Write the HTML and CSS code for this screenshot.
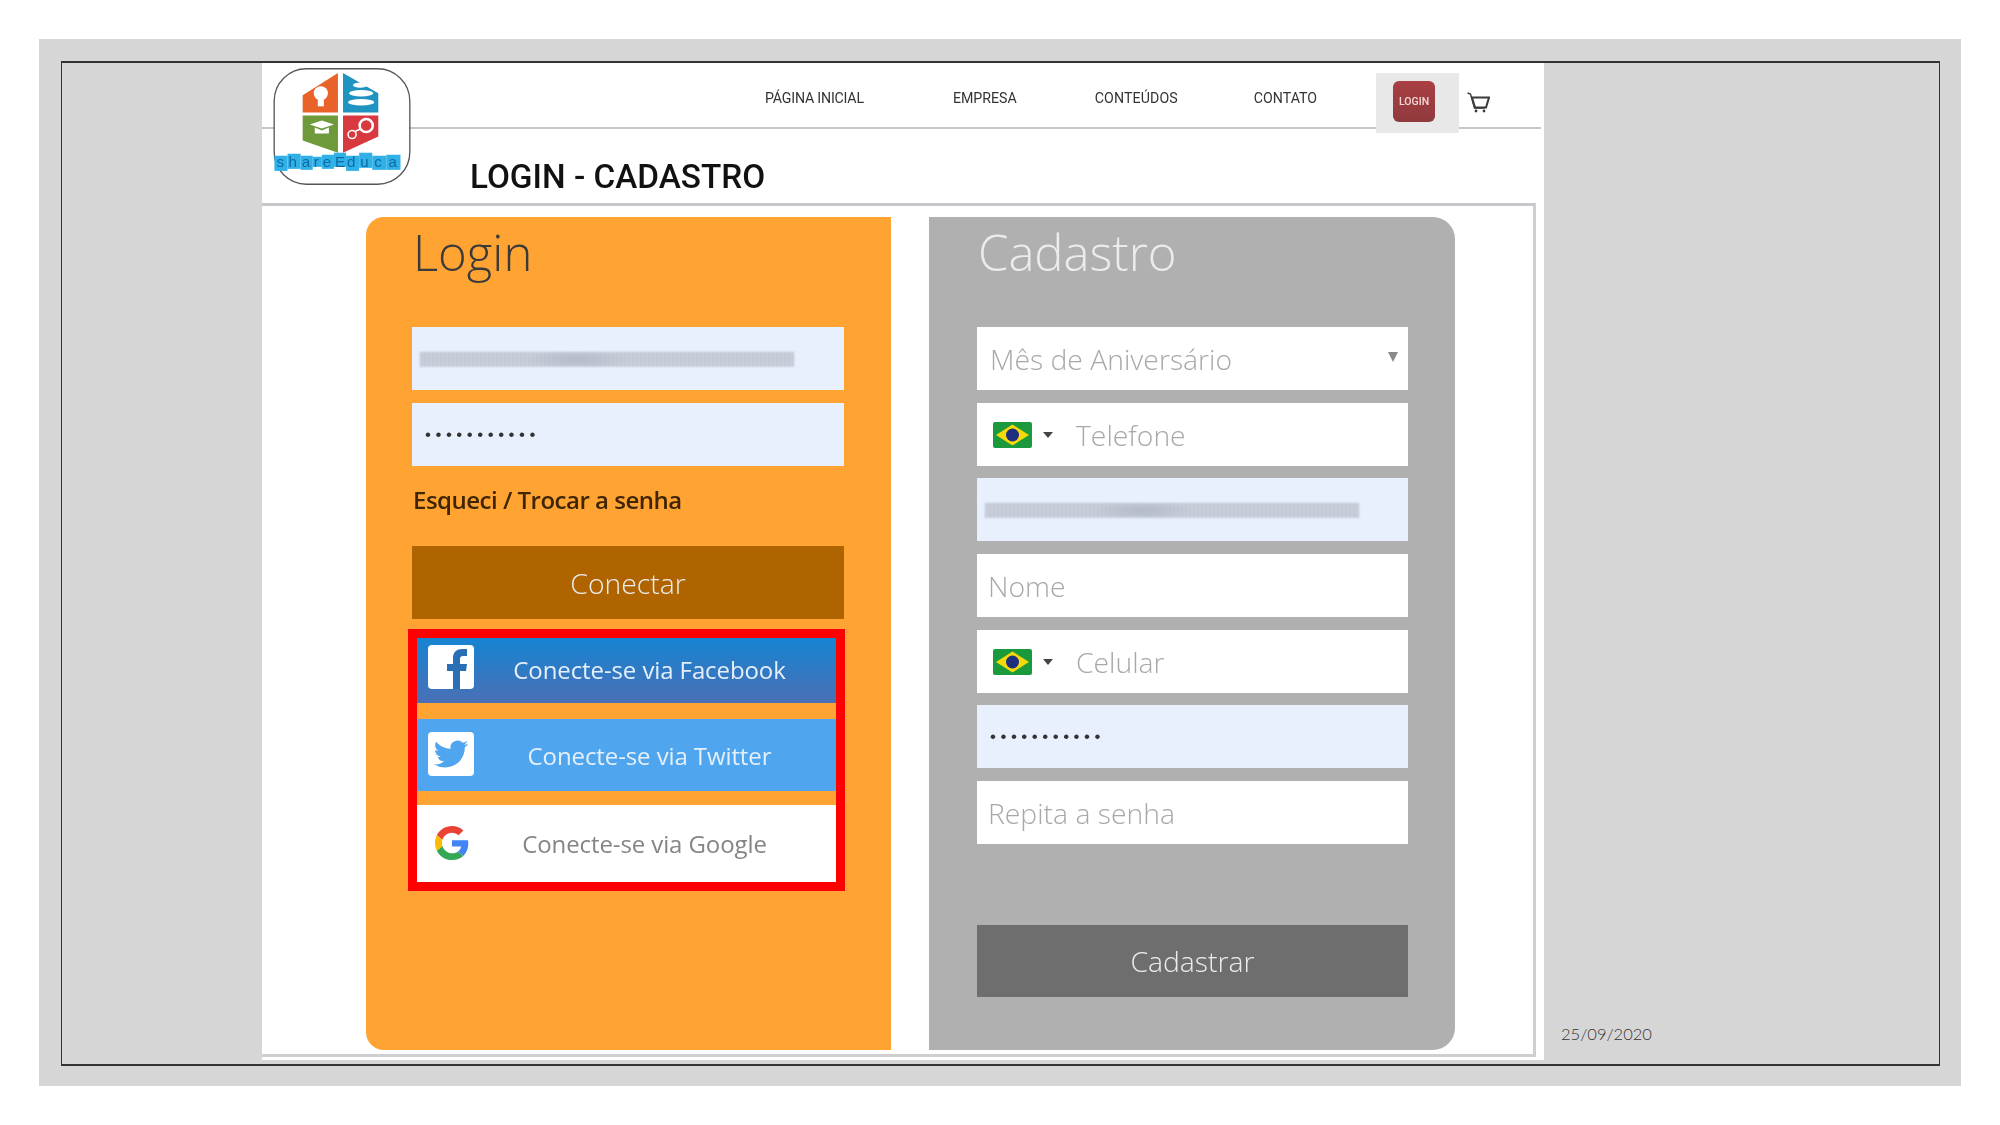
FILE: index.html
```html
<!DOCTYPE html>
<html lang="pt-BR">
<head>
    <meta charset="UTF-8">
    <meta name="viewport" content="width=device-width, initial-scale=1.0">
    <title>Login - Cadastro</title>
    <link rel="stylesheet" href="styles.css">
</head>
<body>
    <div class="slide">
        <div class="frame">
            <div class="shot">
                <header class="topbar">
                    <svg class="logo" viewBox="0 0 136 116" width="138" height="117">
                        <rect x="0.75" y="0.75" width="134.5" height="114.5" rx="32" fill="#fff" stroke="#555" stroke-width="1.3"/>
                        <polygon points="29,27 64,5 64,44 29,44" fill="#e8622a"/>
                        <polygon points="69,5 104,25 104,44 69,44" fill="#1f94c0"/>
                        <polygon points="29,47 64,47 64,84 29,72" fill="#6f9a3c"/>
                        <polygon points="69,47 104,47 104,68 69,84" fill="#d8393f"/>
                        <circle cx="47" cy="25" r="7" fill="#fff"/>
                        <rect x="44" y="30" width="6" height="8" fill="#fff"/>
                        <ellipse cx="87" cy="25" rx="12" ry="3.2" fill="#fff"/>
                        <ellipse cx="87" cy="34" rx="13" ry="3.2" fill="#fff"/>
                        <ellipse cx="86" cy="17" rx="7" ry="2.6" fill="#fff"/>
                        <polygon points="36,56 48,52 60,56 48,60" fill="#fff"/>
                        <path d="M41 59v6h14v-6l-7 3z" fill="#fff"/>
                        <circle cx="92" cy="57" r="6.5" fill="none" stroke="#fff" stroke-width="2.5"/>
                        <circle cx="78" cy="66" r="4" fill="none" stroke="#fff" stroke-width="1.5"/>
                        <path d="M81 63l6-3" stroke="#fff" stroke-width="1.5"/>
                        <g fill="#2fb0e6">
                            <rect x="1" y="87" width="13" height="15"/>
                            <rect x="14" y="85" width="13" height="15"/>
                            <rect x="27" y="87" width="12" height="14"/>
                            <rect x="39" y="88" width="9" height="10"/>
                            <rect x="48" y="86" width="12" height="14"/>
                            <rect x="60" y="84" width="12" height="14"/>
                            <rect x="72" y="87" width="13" height="15"/>
                            <rect x="85" y="84" width="13" height="15"/>
                            <rect x="98" y="87" width="14" height="14"/>
                            <rect x="112" y="86" width="14" height="15"/>
                        </g>
                        <text class="logo-text" y="98" x="3 15 28 40 49 61 73 86 100 114">shareEduca</text>
                    </svg>
                    <nav class="menu">
                        <a class="menu-item home">PÁGINA INICIAL</a>
                        <a class="menu-item company">EMPRESA</a>
                        <a class="menu-item contents">CONTEÚDOS</a>
                        <a class="menu-item contact">CONTATO</a>
                        <div class="login-tab"><span class="login-btn">LOGIN</span></div>
                        <svg class="cart" viewBox="0 0 23 21" width="23" height="21" fill="none" stroke="#3a3a3a">
                            <path d="M0.5 1l3 1 4 14h10" stroke-width="1.4"/>
                            <path d="M5 5.5h17l-3 10H8z" stroke-width="2"/>
                            <circle cx="9" cy="19" r="1.4" fill="#3a3a3a" stroke="none"/>
                            <circle cx="17" cy="19" r="1.4" fill="#3a3a3a" stroke="none"/>
                        </svg>
                    </nav>
                </header>

                <h1 class="page-title">LOGIN - CADASTRO</h1>

                <main class="content">
                    <section class="card card-login">
                        <h2 class="card-title">Login</h2>
                        <div class="field autofill"><div class="smudge"></div></div>
                        <div class="field autofill gap-13 dots">•••••••••••</div>
                        <a class="forgot">Esqueci / Trocar a senha</a>
                        <button class="submit submit-login" type="button">Conectar</button>
                        <div class="social">
                            <a class="social-btn facebook">
                                <span class="social-icon">
                                    <svg viewBox="0 0 46 44" width="46" height="44"><path fill="#2a6fb6" d="M25 44V26h-6v-7h6v-6c0-6 4-9 9-9h5v7h-4c-2 0-3 1-3 3v5h7l-1 7h-6v18z"/></svg>
                                </span>
                                <span class="social-text">Conecte-se via Facebook</span>
                            </a>
                            <a class="social-btn twitter">
                                <span class="social-icon">
                                    <svg viewBox="-4 -4 32 32" width="46" height="44" preserveAspectRatio="none"><path fill="#4fa6ee" d="M23.953 4.57a10 10 0 01-2.825.775 4.958 4.958 0 002.163-2.723c-.951.555-2.005.959-3.127 1.184a4.92 4.92 0 00-8.384 4.482C7.69 8.095 4.067 6.13 1.64 3.162a4.822 4.822 0 00-.666 2.475c0 1.71.87 3.213 2.188 4.096a4.904 4.904 0 01-2.228-.616v.06a4.923 4.923 0 003.946 4.827 4.996 4.996 0 01-2.212.085 4.936 4.936 0 004.604 3.417 9.867 9.867 0 01-6.102 2.105c-.39 0-.779-.023-1.17-.067a13.995 13.995 0 007.557 2.209c9.053 0 13.998-7.496 13.998-13.985 0-.21 0-.42-.015-.63A9.935 9.935 0 0024 4.59z"/></svg>
                                </span>
                                <span class="social-text">Conecte-se via Twitter</span>
                            </a>
                            <a class="social-btn google">
                                <span class="social-icon plain">
                                    <svg viewBox="0 0 48 48" width="34" height="34">
                                        <path fill="#EA4335" d="M24 9.5c3.54 0 6.71 1.22 9.21 3.6l6.85-6.85C35.9 2.38 30.47 0 24 0 14.62 0 6.51 5.38 2.56 13.22l7.98 6.19C12.43 13.72 17.74 9.5 24 9.5z"/>
                                        <path fill="#4285F4" d="M46.98 24.55c0-1.57-.15-3.09-.38-4.55H24v9.02h12.94c-.58 2.96-2.26 5.48-4.78 7.18l7.73 6c4.51-4.18 7.09-10.36 7.09-17.65z"/>
                                        <path fill="#FBBC05" d="M10.53 28.59c-.48-1.45-.76-2.99-.76-4.59s.27-3.14.76-4.59l-7.98-6.19C.92 16.46 0 20.12 0 24c0 3.88.92 7.54 2.56 10.78l7.97-6.19z"/>
                                        <path fill="#34A853" d="M24 48c6.48 0 11.93-2.13 15.89-5.81l-7.73-6c-2.15 1.45-4.92 2.3-8.16 2.3-6.26 0-11.57-4.22-13.47-9.91l-7.98 6.19C6.51 42.62 14.62 48 24 48z"/>
                                    </svg>
                                </span>
                                <span class="social-text">Conecte-se via Google</span>
                            </a>
                        </div>
                    </section>

                    <section class="card card-signup">
                        <h2 class="card-title light">Cadastro</h2>
                        <div class="field select">Mês de Aniversário<span class="select-arrow"></span></div>
                        <div class="field phone gap-13">
                            <svg class="flag" viewBox="0 0 39 26" width="39" height="26">
                                <rect width="39" height="26" rx="2" fill="#1a9a3c"/>
                                <polygon points="19.5,2.5 36,13 19.5,23.5 3,13" fill="#f5d90a"/>
                                <circle cx="19.5" cy="13" r="6.5" fill="#1f2f80"/>
                            </svg>
                            <span class="caret"></span>
                            <span class="phone-label">Telefone</span>
                        </div>
                        <div class="field autofill gap-12"><div class="smudge"></div></div>
                        <div class="field gap-13">Nome</div>
                        <div class="field phone gap-13">
                            <svg class="flag" viewBox="0 0 39 26" width="39" height="26">
                                <rect width="39" height="26" rx="2" fill="#1a9a3c"/>
                                <polygon points="19.5,2.5 36,13 19.5,23.5 3,13" fill="#f5d90a"/>
                                <circle cx="19.5" cy="13" r="6.5" fill="#1f2f80"/>
                            </svg>
                            <span class="caret"></span>
                            <span class="phone-label">Celular</span>
                        </div>
                        <div class="field autofill gap-12 dots">•••••••••••</div>
                        <div class="field gap-13">Repita a senha</div>
                        <button class="submit submit-signup" type="button">Cadastrar</button>
                    </section>
                </main>
            </div>
            <p class="slide-date">25/09/2020</p>
        </div>
    </div>
</body>
</html>
```

FILE: styles.css
```css
* {
    box-sizing: border-box;
}
body {
    margin: 0;
    height: 1125px;
    background: #fff;
    padding: 39px 39px 39px 39px;
    font-family: "Open Sans", sans-serif;
    overflow: hidden;
}
.slide {
    height: 1047px;
    background: #d6d6d6;
    padding: 22px 21px 20px 22px;
}
.frame {
    height: 1005px;
    border: 2px solid #333;
    border-width: 2px 1.5px 2.5px 1.5px;
    display: flex;
    padding-left: 200px;
}

/* screenshot of the site */
.shot {
    position: relative;
    width: 1282px;
    height: 997px;
    background: #fff;
    filter: blur(0.6px);
}
.topbar {
    height: 66px;
    margin-right: 3px;
    border-bottom: 2px solid #c6c6c6;
}
.logo {
    position: absolute;
    left: 11px;
    top: 5px;
    z-index: 2;
}
.logo-text {
    font-family: "Liberation Sans", sans-serif;
    font-size: 15px;
    fill: #0e6aa6;
}
.menu {
    display: flex;
    align-items: flex-start;
    height: 70px;
    padding: 10px 0 0 503px;
}
.menu-item {
    font-family: Roboto, sans-serif;
    font-size: 14.2px;
    color: #333;
    line-height: 16px;
    margin-top: 17px;
}
.home { letter-spacing: -0.2px; }
.company { margin-left: 89px; }
.contents { margin-left: 78px; letter-spacing: 0.1px; }
.contact { margin-left: 76px; }
.login-tab {
    width: 83px;
    height: 60px;
    margin-left: 59px;
    background: #e8e8e8;
    padding: 8px 0 0 17px;
}
.login-btn {
    display: flex;
    align-items: center;
    justify-content: center;
    width: 42px;
    height: 41px;
    border-radius: 6px;
    background: linear-gradient(#aa3f42, #8f3a3e);
    color: #f4d8d8;
    font-family: Roboto, sans-serif;
    font-size: 10.5px;
    font-weight: 500;
}
.cart {
    margin: 19px 0 0 8px;
}
.page-title {
    margin: 0;
    height: 74px;
    padding: 28px 0 0 208px;
    font-family: Roboto, sans-serif;
    font-size: 33.3px;
    font-weight: 500;
    line-height: 40px;
    color: #111;
}
.content {
    display: flex;
    gap: 38px;
    height: 854px;
    margin-right: 8px;
    padding: 11px 0 0 104px;
    border-top: 3px solid #c9c6cb;
    border-right: 3px solid #cfcfcf;
    border-bottom: 3px solid #cfcfcf;
}
.card {
    width: 525px;
    height: 833px;
    padding: 0 47px 0 46px;
}
.card-login {
    background: #ffa433;
    border-radius: 18px 0 0 18px;
}
.card-signup {
    width: 526px;
    background: #b0b0b0;
    border-radius: 0 22px 22px 0;
    padding: 0 47px 0 48px;
}
.card-title {
    margin: 0;
    height: 110px;
    padding-left: 1px;
    font-size: 49px;
    font-weight: 300;
    line-height: 70px;
    color: #3a3a3a;
}
.card-title.light {
    color: #ececec;
}

/* form fields */
.field {
    position: relative;
    display: flex;
    align-items: center;
    height: 63px;
    padding-left: 11px;
    background: #fff;
    font-size: 28.3px;
    font-weight: 300;
    color: #a8a8a8;
}
.select {
    padding-left: 13px;
}
.autofill {
    background: #e8f0fe;
}
.gap-12 { margin-top: 12px; }
.gap-13 { margin-top: 13px; }
.dots {
    padding-left: 13px;
    font-family: "Liberation Sans", sans-serif;
    font-size: 17px;
    font-weight: normal;
    letter-spacing: 4.5px;
    color: #333;
}
.smudge {
    position: absolute;
    left: 8px;
    top: 25px;
    width: 374px;
    height: 15px;
    background:
        repeating-linear-gradient(0deg, rgba(232, 240, 254, 0.5) 0 1px, transparent 1px 3px),
        radial-gradient(ellipse 50px 10px at 42% 50%, #a9b0bd, transparent),
        repeating-linear-gradient(90deg, #b4bac6 0 2px, #c9ceda 2px 4px);
    filter: blur(1.2px);
}
.select-arrow {
    position: absolute;
    right: 10px;
    top: 25px;
    border-left: 5px solid transparent;
    border-right: 5px solid transparent;
    border-top: 10px solid #8a8a8a;
}
.phone {
    padding-left: 16px;
}
.caret {
    margin-left: 11px;
    border-left: 5.5px solid transparent;
    border-right: 5.5px solid transparent;
    border-top: 6px solid #444;
}
.phone-label {
    margin-left: 23px;
}
.forgot {
    display: block;
    height: 80px;
    padding: 17px 0 0 1px;
    font-size: 24px;
    font-weight: 600;
    line-height: 34px;
    letter-spacing: -0.5px;
    color: #3f2504;
}
.submit {
    display: block;
    width: 100%;
    height: 73px;
    border: 0;
    font-family: "Open Sans", sans-serif;
    font-size: 28.3px;
    font-weight: 300;
    color: #ececec;
}
.submit-login {
    background: #b06400;
}
.submit-signup {
    height: 72px;
    margin-top: 81px;
    background: #6e6e6e;
}

/* social buttons */
.social {
    margin: 10px -1px 0 -4px;
    border: 9.5px solid #f00;
    background: #ffa433;
}
.social-btn {
    position: relative;
    display: flex;
    align-items: center;
    justify-content: center;
    font-size: 24px;
    letter-spacing: -0.1px;
    color: #e4effa;
}
.facebook {
    height: 65px;
    padding: 0 0 3px 46px;
    background: linear-gradient(#1684d2, #4a6fb5);
}
.twitter {
    height: 72px;
    margin-top: 16px;
    padding-left: 46px;
    background: #4fa6ee;
}
.google {
    height: 77px;
    margin-top: 14px;
    padding-left: 36px;
    background: #fff;
    color: #858585;
}
.social-icon {
    position: absolute;
    left: 10.5px;
    top: 7px;
    width: 46px;
    height: 44px;
    background: #fff;
    border-radius: 4px;
    overflow: hidden;
}
.twitter .social-icon {
    top: 13px;
}
.social-icon.plain {
    left: 18px;
    top: 21px;
    width: 34px;
    height: 34px;
    background: none;
}

.slide-date {
    align-self: flex-end;
    margin: 0 0 20px 17px;
    font-family: Lato, sans-serif;
    font-size: 16.5px;
    font-weight: 300;
    color: #333;
}
```
